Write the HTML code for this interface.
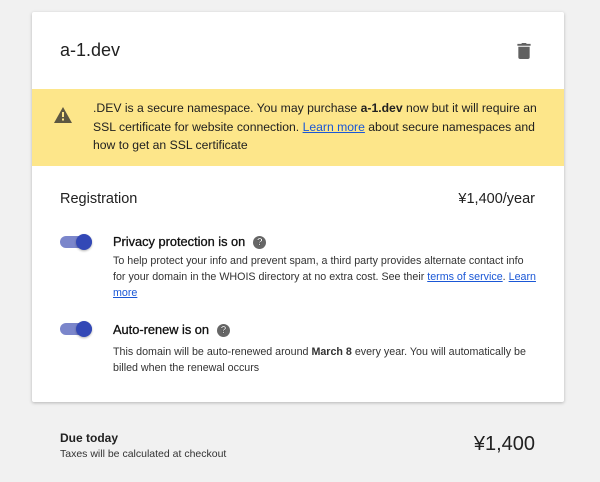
<!DOCTYPE html>
<html><head><style>
body{margin:0;width:600px;height:482px;background:#f1f1f1;font-family:"Liberation Sans",sans-serif;color:#212121;position:relative;overflow:hidden}
.card{position:absolute;left:32px;top:12px;width:532px;height:390px;background:#fff;box-shadow:0 1px 3px rgba(0,0,0,.25);border-radius:2px}
.a{position:absolute;white-space:nowrap}
a{color:#1a57d6;text-decoration:underline}
.warn{position:absolute;left:0;top:77px;width:532px;height:77px;background:#fde68a}
.tg{position:absolute;width:32px;height:16px}
.tg .tr{position:absolute;left:0;top:2px;width:32px;height:12px;border-radius:6px;background:#7b86cb}
.tg .kn{position:absolute;left:16px;top:0;width:16px;height:16px;border-radius:50%;background:#3348b6;box-shadow:0 1px 2px rgba(0,0,0,.3)}
.q{display:inline-block;width:13px;height:13px;border-radius:50%;background:#666;color:#fff;font-size:10px;font-weight:bold;text-align:center;line-height:13px;vertical-align:1px;margin-left:8px}
.d{font-size:10.7px;line-height:16px;color:#333}
.lb{font-size:12.8px;color:#111;-webkit-text-stroke:0.3px #111}
</style></head><body>
<div class="card">
<div class="a" style="left:28px;top:28px;font-size:18px">a-1.dev</div>
<svg class="a" style="left:485px;top:30px" width="14" height="17" viewBox="0 0 14 18"><path d="M1 5h12v11a2 2 0 0 1-2 2H3a2 2 0 0 1-2-2z M0 2h4l1-1h4l1 1h4v2H0z" fill="#616161"/></svg>
<div class="warn">
<svg class="a" style="left:22px;top:18px" width="18" height="16" viewBox="0 0 18 16"><path d="M9 0L18 16H0z" fill="#5d5741"/><rect x="8" y="5" width="2" height="5" fill="#fde68a"/><rect x="8" y="11.5" width="2" height="2" fill="#fde68a"/></svg>
<div class="a" style="left:61px;top:10px;font-size:12.2px;line-height:18.5px">.DEV is a secure namespace. You may purchase <b>a-1.dev</b> now but it will require an<br>SSL certificate for website connection. <a>Learn more</a> about secure namespaces and<br>how to get an SSL certificate</div>
</div>
<div class="a" style="left:28px;top:179px;font-size:14.5px">Registration</div>
<div class="a" style="right:29px;top:179px;font-size:14.5px">¥1,400/year</div>
<div class="tg" style="left:28px;top:222px"><div class="tr"></div><div class="kn"></div></div>
<div class="a lb" style="left:81px;top:222px">Privacy protection is on<span class="q">?</span></div>
<div class="a d" style="left:81px;top:241px">To help protect your info and prevent spam, a third party provides alternate contact info<br>for your domain in the WHOIS directory at no extra cost. See their <a>terms of service</a>. <a>Learn</a><br><a>more</a></div>
<div class="tg" style="left:28px;top:309px"><div class="tr"></div><div class="kn"></div></div>
<div class="a lb" style="left:81px;top:310px">Auto-renew is on<span class="q">?</span></div>
<div class="a d" style="left:81px;top:332px">This domain will be auto-renewed around <b>March 8</b> every year. You will automatically be<br>billed when the renewal occurs</div>
</div>
<div class="a" style="left:60px;top:431px;font-size:12px;font-weight:bold">Due today</div>
<div class="a" style="left:60px;top:448px;font-size:10.5px;color:#333">Taxes will be calculated at checkout</div>
<div class="a" style="right:65px;top:433px;font-size:20px">¥1,400</div>
</body></html>
